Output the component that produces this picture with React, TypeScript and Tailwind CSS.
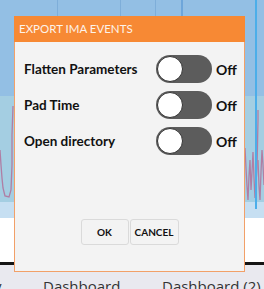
import React from "react";

function Toggle() {
    return (
        <div className="relative w-[56px] h-[28px] rounded-full bg-[#5c5c5c]">
            <div className="absolute left-[1px] top-[1px] w-[26px] h-[26px] rounded-full bg-white border-[1.5px] border-[#333]" />
        </div>
    );
}

const options = ["Flatten Parameters", "Pad Time", "Open directory"];

export default function App() {
    return (
        <div className="relative w-[264px] h-[289px] overflow-hidden font-['Lato',sans-serif]">
            <div className="h-[96px] bg-[#93bfe4]" />
            <div className="h-[106px] bg-[#a4cee2]" />
            <div className="h-[16px] bg-[#c6dff2]" />
            <div className="h-[44px] bg-white" />
            <div className="h-[3px] bg-[#151515]" />
            <div className="relative h-[24px] bg-[#e9e9ef] text-[15px] text-[#333] leading-none font-['Open_Sans',sans-serif]">
                <span className="absolute left-[-6px] top-[14px]">y</span>
                <span className="absolute left-[43px] top-[14px]">Dashboard</span>
                <span className="absolute left-[162px] top-[14px]">Dashboard (2)</span>
            </div>

            {/* chart drawn behind the dialog */}
            <svg className="absolute left-0 top-0" width="264" height="289">
                <g stroke="#7eaed9" strokeWidth="1">
                    <line x1="57.5" y1="0" x2="57.5" y2="96" />
                    <line x1="120.5" y1="0" x2="120.5" y2="96" />
                    <line x1="155.5" y1="0" x2="155.5" y2="96" />
                </g>
                <line x1="182" y1="0" x2="182" y2="96" stroke="#6ea6da" strokeWidth="2" />
                <g fill="none" stroke="#b36b95" strokeWidth="1.3" opacity="0.8">
                    <polyline points="0,150 1,165 2,178 3,188 5,196 9,197 11,190 12,165 12,135 13,106" />
                    <polyline points="245,148 246,168 247,186 248,200 249,176 250,160 251,190 252,172 253,152 254,178 255,198 257,168 258,120 258,110" />
                    <polyline points="258,160 259,186 260,200 261,172 262,150 263,165 264,185" />
                </g>
                <line x1="256" y1="0" x2="256" y2="209" stroke="#4caee9" strokeWidth="2" />
            </svg>

            {/* dialog */}
            <div className="absolute left-[14px] top-[16px] w-[231px] h-[256px] flex flex-col">
                <div className="h-[26px] bg-[#f78934] text-[#fdf3ea] text-[11.5px] leading-[26px] pl-[5px]">
                    EXPORT IMA EVENTS
                </div>
                <div className="flex-1 bg-[#f3f3f3] border border-t-0 border-[#f2a068] flex flex-col pl-[9px] pt-[13px]">
                    <div className="flex flex-col gap-[8px]">
                        {options.map((label) => (
                            <div key={label} className="flex items-center h-[28px]">
                                <span className="w-[132px] whitespace-nowrap text-[13.5px] font-bold text-[#111]">{label}</span>
                                <Toggle />
                                <span className="ml-[4px] text-[14px] font-bold text-[#111]">Off</span>
                            </div>
                        ))}
                    </div>
                    <div className="flex justify-center gap-[1px] mt-[64px] pr-[9px]">
                        <button className="w-[48px] h-[26px] rounded-[3px] border border-[#dadada] bg-[#f3f3f3] text-[10px] font-bold text-[#111]">
                            OK
                        </button>
                        <button className="w-[49px] h-[26px] rounded-[3px] border border-[#dadada] bg-[#f3f3f3] text-[10px] font-bold text-[#111]">
                            CANCEL
                        </button>
                    </div>
                </div>
            </div>
        </div>
    );
}
